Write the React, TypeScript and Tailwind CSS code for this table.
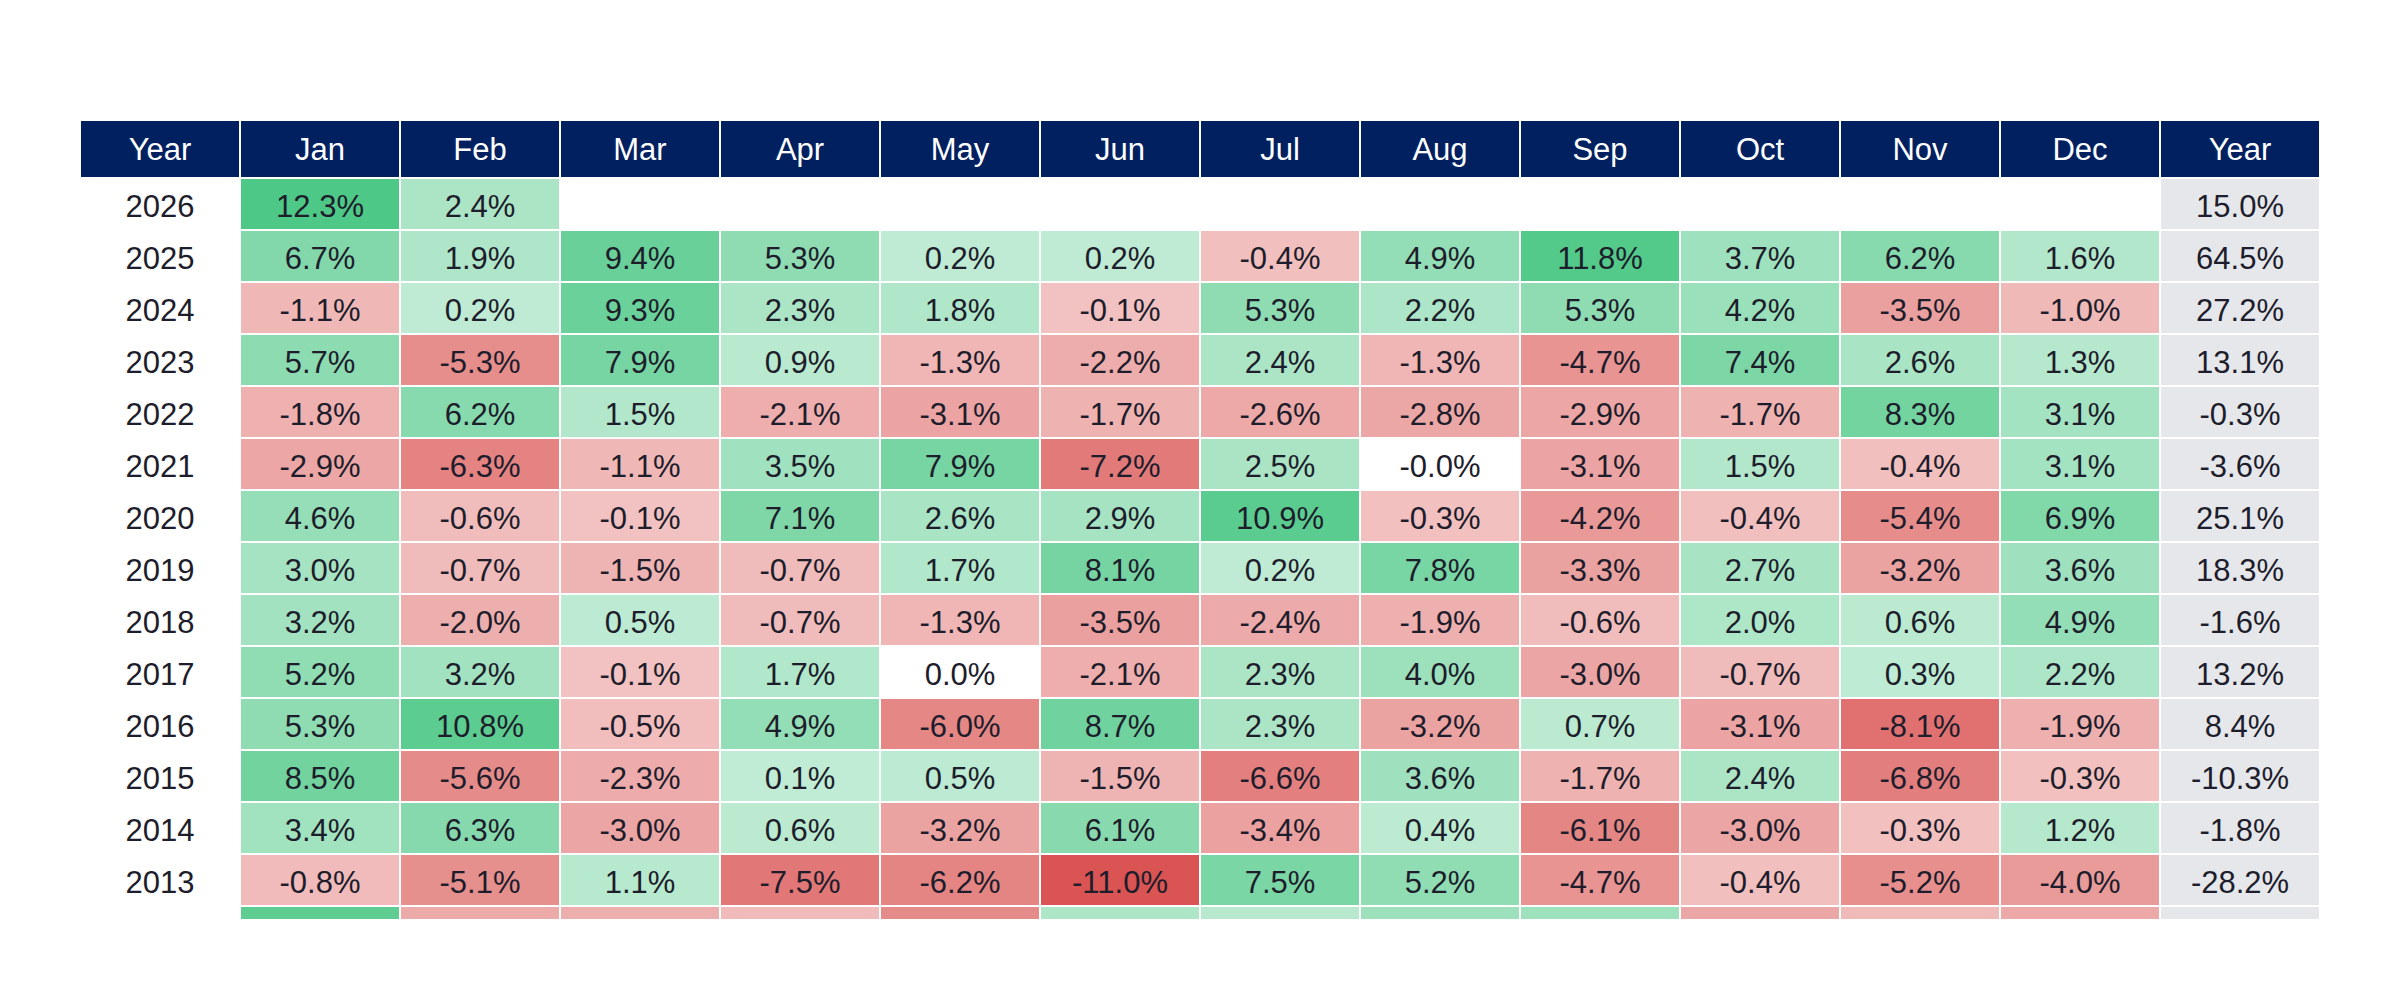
const months = ['Jan', 'Feb', 'Mar', 'Apr', 'May', 'Jun', 'Jul', 'Aug', 'Sep', 'Oct', 'Nov', 'Dec'];

// monthly returns in %, '' = no data yet
const rows: { year: number; m: string[]; total: string }[] = [
  { year: 2026, m: ['12.3', '2.4', '', '', '', '', '', '', '', '', '', ''], total: '15.0' },
  { year: 2025, m: ['6.7', '1.9', '9.4', '5.3', '0.2', '0.2', '-0.4', '4.9', '11.8', '3.7', '6.2', '1.6'], total: '64.5' },
  { year: 2024, m: ['-1.1', '0.2', '9.3', '2.3', '1.8', '-0.1', '5.3', '2.2', '5.3', '4.2', '-3.5', '-1.0'], total: '27.2' },
  { year: 2023, m: ['5.7', '-5.3', '7.9', '0.9', '-1.3', '-2.2', '2.4', '-1.3', '-4.7', '7.4', '2.6', '1.3'], total: '13.1' },
  { year: 2022, m: ['-1.8', '6.2', '1.5', '-2.1', '-3.1', '-1.7', '-2.6', '-2.8', '-2.9', '-1.7', '8.3', '3.1'], total: '-0.3' },
  { year: 2021, m: ['-2.9', '-6.3', '-1.1', '3.5', '7.9', '-7.2', '2.5', '-0.0', '-3.1', '1.5', '-0.4', '3.1'], total: '-3.6' },
  { year: 2020, m: ['4.6', '-0.6', '-0.1', '7.1', '2.6', '2.9', '10.9', '-0.3', '-4.2', '-0.4', '-5.4', '6.9'], total: '25.1' },
  { year: 2019, m: ['3.0', '-0.7', '-1.5', '-0.7', '1.7', '8.1', '0.2', '7.8', '-3.3', '2.7', '-3.2', '3.6'], total: '18.3' },
  { year: 2018, m: ['3.2', '-2.0', '0.5', '-0.7', '-1.3', '-3.5', '-2.4', '-1.9', '-0.6', '2.0', '0.6', '4.9'], total: '-1.6' },
  { year: 2017, m: ['5.2', '3.2', '-0.1', '1.7', '0.0', '-2.1', '2.3', '4.0', '-3.0', '-0.7', '0.3', '2.2'], total: '13.2' },
  { year: 2016, m: ['5.3', '10.8', '-0.5', '4.9', '-6.0', '8.7', '2.3', '-3.2', '0.7', '-3.1', '-8.1', '-1.9'], total: '8.4' },
  { year: 2015, m: ['8.5', '-5.6', '-2.3', '0.1', '0.5', '-1.5', '-6.6', '3.6', '-1.7', '2.4', '-6.8', '-0.3'], total: '-10.3' },
  { year: 2014, m: ['3.4', '6.3', '-3.0', '0.6', '-3.2', '6.1', '-3.4', '0.4', '-6.1', '-3.0', '-0.3', '1.2'], total: '-1.8' },
  { year: 2013, m: ['-0.8', '-5.1', '1.1', '-7.5', '-6.2', '-11.0', '7.5', '5.2', '-4.7', '-0.4', '-5.2', '-4.0'], total: '-28.2' },
];

// next row is scrolled out of view: only the colour strip shows
const partial = ['10.5', '-2.5', '-2.0', '-0.8', '-5.5', '2.0', '1.0', '4.0', '3.8', '-2.8', '-0.9', '-2.6'];

function cellColor(s: string) {
  const v = parseFloat(s);
  if (!s || isNaN(v) || v === 0) return '#ffffff';
  const base = v > 0 ? [78, 200, 135] : [217, 84, 82];
  const max = v > 0 ? 12.3 : 11.0;
  const a = 0.35 + 0.65 * Math.min(Math.abs(v) / max, 1);
  const c = base.map((b) => Math.round(255 - a * (255 - b)));
  return `rgb(${c[0]}, ${c[1]}, ${c[2]})`;
}

export default function App() {
  return (
    <div className="min-h-screen w-full bg-white pt-[121px]" style={{ fontFamily: '"Liberation Sans", Arial, sans-serif' }}>
      <div className="mx-auto w-[2238px] h-[798px] overflow-hidden">
        <div className="grid grid-cols-[repeat(14,158px)] gap-[2px] text-[31px] text-[#1d1d2b]">
          <div className="h-[56px] pt-[2px] bg-[#002060] text-white flex items-center justify-center">Year</div>
          {months.map((m) => (
            <div key={m} className="h-[56px] pt-[2px] bg-[#002060] text-white flex items-center justify-center">
              {m}
            </div>
          ))}
          <div className="h-[56px] pt-[2px] bg-[#002060] text-white flex items-center justify-center">Year</div>

          {rows.map((r) => (
            <>
              <div key={r.year} className="h-[50px] pt-[6px] bg-white flex items-center justify-center">
                {r.year}
              </div>
              {r.m.map((v, i) => (
                <div
                  key={`${r.year}-${i}`}
                  className="h-[50px] pt-[6px] flex items-center justify-center"
                  style={{ backgroundColor: cellColor(v) }}
                >
                  {v ? `${v}%` : ''}
                </div>
              ))}
              <div key={`${r.year}-t`} className="h-[50px] pt-[6px] bg-[#e5e7eb] flex items-center justify-center">
                {r.total}%
              </div>
            </>
          ))}

          <div className="h-[50px] bg-white" />
          {partial.map((v, i) => (
            <div key={`p-${i}`} className="h-[50px]" style={{ backgroundColor: cellColor(v) }} />
          ))}
          <div className="h-[50px] bg-[#e5e7eb]" />
        </div>
      </div>
    </div>
  );
}
